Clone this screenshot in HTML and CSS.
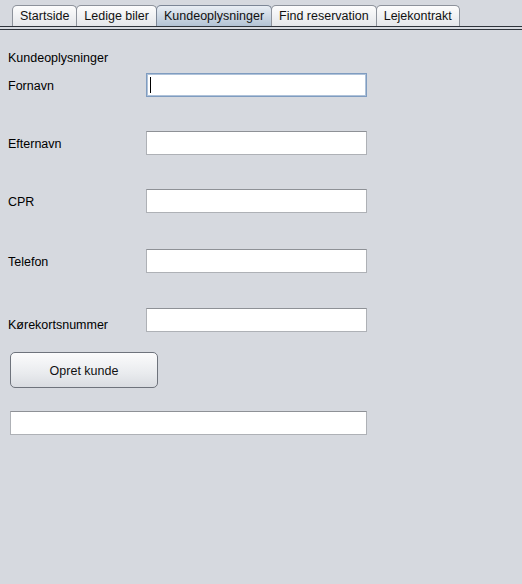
FILE: index.html
```html
<!DOCTYPE html>
<html lang="da">
<head>
<meta charset="utf-8">
<title>Kundeoplysninger</title>
<link rel="stylesheet" href="styles.css">
</head>
<body>
<div class="window">
  <div class="tabbar">
    <div class="tabs">
      <div class="tab">Startside</div>
      <div class="tab">Ledige biler</div>
      <div class="tab active">Kundeoplysninger</div>
      <div class="tab">Find reservation</div>
      <div class="tab">Lejekontrakt</div>
    </div>
  </div>
  <div class="panel">
    <div class="heading">Kundeoplysninger</div>
    <div class="row first">
      <div class="label">Fornavn</div>
      <div class="field focused"><span class="caret"></span></div>
    </div>
    <div class="row">
      <div class="label">Efternavn</div>
      <div class="field"></div>
    </div>
    <div class="row">
      <div class="label">CPR</div>
      <div class="field"></div>
    </div>
    <div class="row wide-gap">
      <div class="label">Telefon</div>
      <div class="field"></div>
    </div>
    <div class="row">
      <div class="label low">Kørekortsnummer</div>
      <div class="field"></div>
    </div>
    <button class="btn">Opret kunde</button>
    <div class="field output"></div>
  </div>
</div>
</body>
</html>
```
FILE: styles.css
```css
html, body {
  margin: 0;
  padding: 0;
}
body {
  background: #d6d9df;
  font-family: "Liberation Sans", Arial, sans-serif;
  font-size: 12.5px;
  color: #000;
  width: 522px;
  height: 584px;
  overflow: hidden;
}
.tabbar {
  padding-top: 5px;
  border-bottom: 1px solid #2e333b;
}
.tabs {
  display: flex;
  padding-left: 12px;
  height: 21px;
}
.tab {
  box-sizing: border-box;
  height: 21px;
  line-height: 21px;
  padding: 0 7px;
  border: 1px solid #8d929b;
  border-bottom: none;
  border-radius: 5px 5px 0 0;
  margin-right: -1px;
  background: linear-gradient(#fdfdfd, #e4e6ea);
  color: #111;
  white-space: nowrap;
}
.tab.active {
  background: linear-gradient(#e9eef4, #b3c3d5);
  border-color: #7c8696;
}
.panel {
  margin-top: 2px;
  border-top: 1px solid #2e333b;
  padding: 21px 0 0 8px;
  display: flex;
  flex-direction: column;
  align-items: flex-start;
}
.heading {
  line-height: 14px;
}
.row {
  display: flex;
  align-items: center;
  margin-top: 34px;
}
.row.first {
  margin-top: 8px;
}
.row.wide-gap {
  margin-top: 36px;
}
.label {
  width: 138px;
  line-height: 14px;
  padding-top: 1px;
}
.label.low {
  align-self: flex-start;
  padding-top: 11px;
}
.field {
  box-sizing: border-box;
  width: 221px;
  height: 24px;
  background: #fff;
  border: 1px solid #aeb1b6;
  border-top-color: #8e9196;
  position: relative;
}
.field.focused {
  border: 1px solid #7f9cc0;
  box-shadow: inset 0 0 0 1px #afc2d9;
}
.caret {
  position: absolute;
  left: 3px;
  top: 3px;
  width: 1px;
  height: 16px;
  background: #000;
}
.btn {
  margin: 20px 0 0 2px;
  width: 148px;
  height: 36px;
  border: 1px solid #6e737c;
  border-radius: 5px;
  background: linear-gradient(#fbfbfc, #e9ebee 60%, #d9dce1);
  font-family: "Liberation Sans", Arial, sans-serif;
  font-size: 12.5px;
  color: #111;
  padding: 2px 0 0;
}
.field.output {
  margin: 23px 0 0 2px;
  width: 357px;
}
```
